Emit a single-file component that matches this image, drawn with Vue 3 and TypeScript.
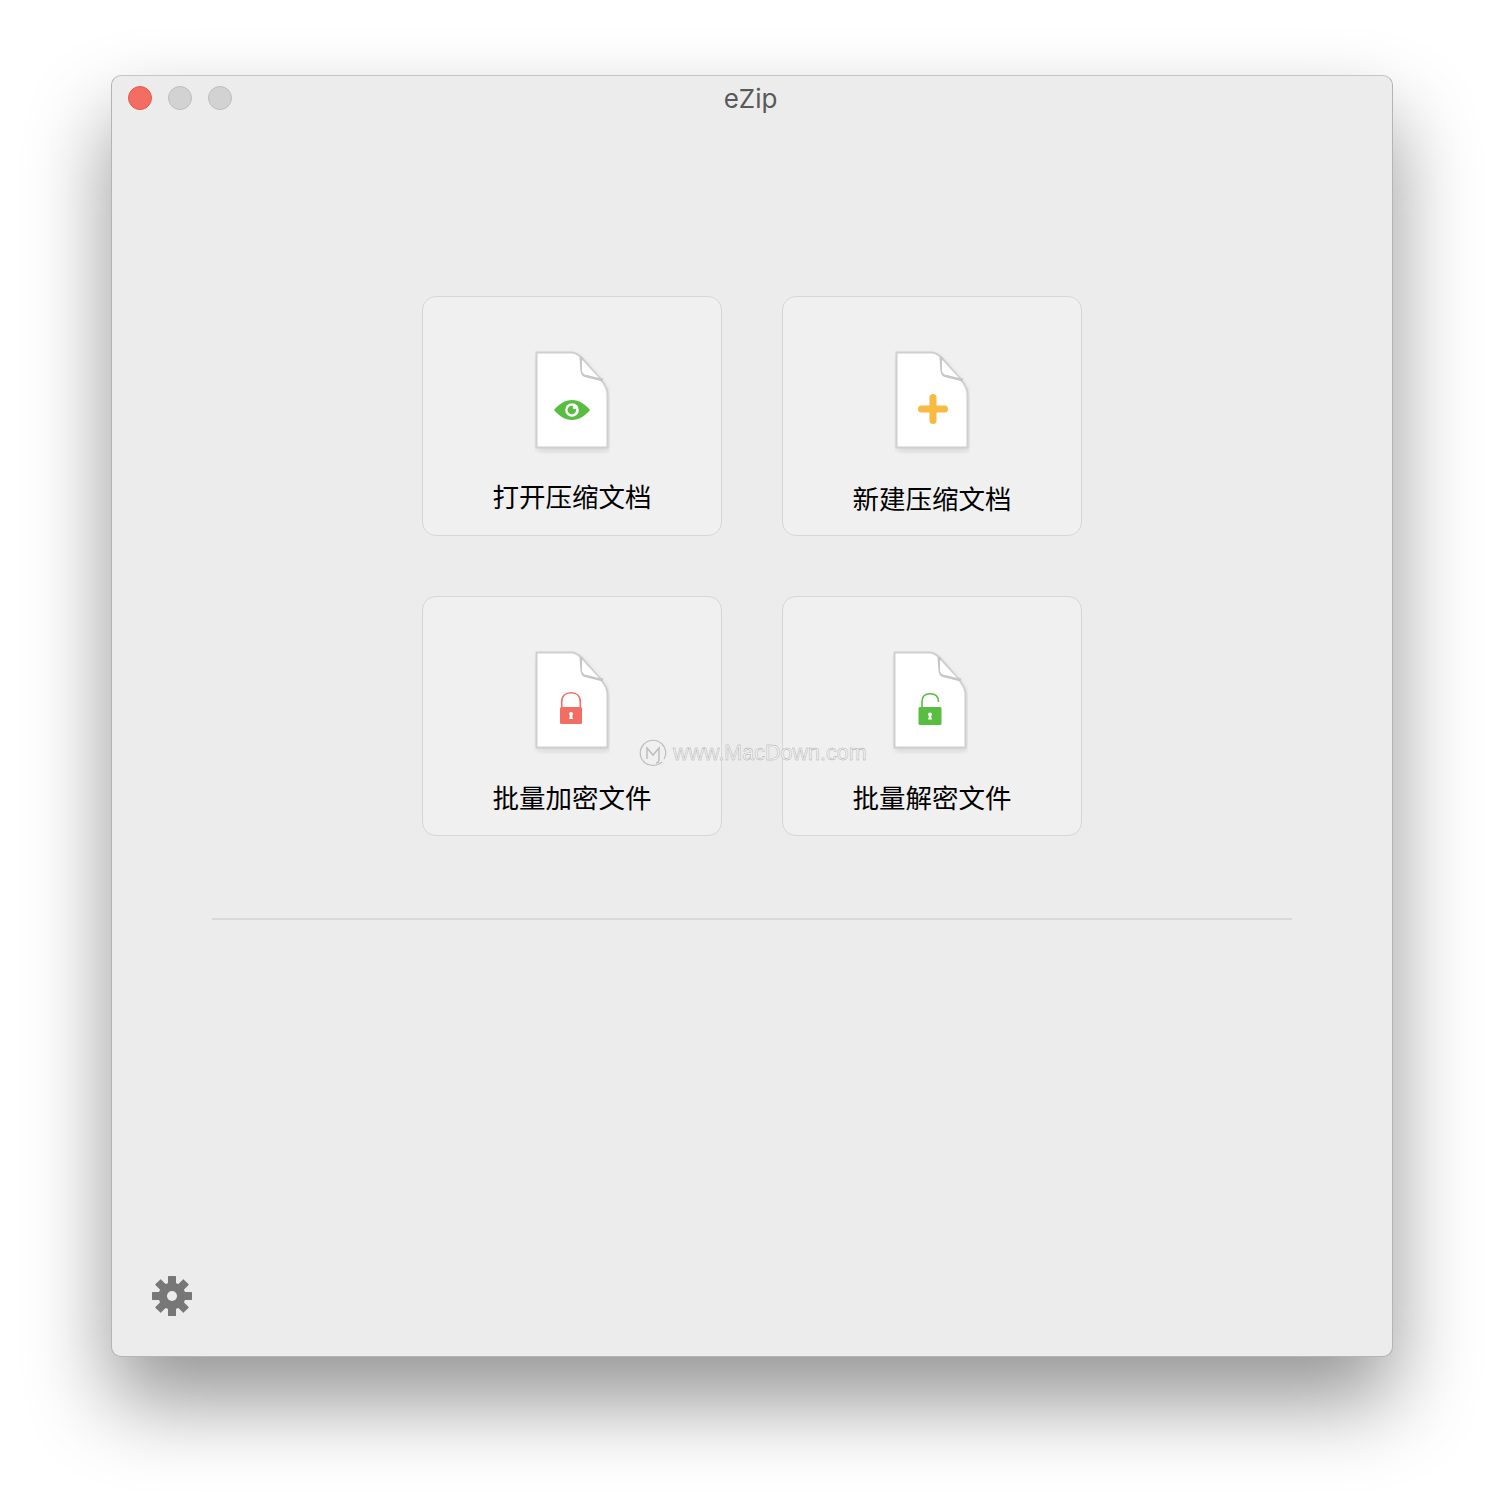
<script setup lang="ts">
interface Action {
  id: string;
  label: string;
  icon: 'eye' | 'plus' | 'lock' | 'unlock';
}

const actions: Action[] = [
  { id: 'open', label: '打开压缩文档', icon: 'eye' },
  { id: 'create', label: '新建压缩文档', icon: 'plus' },
  { id: 'encrypt', label: '批量加密文件', icon: 'lock' },
  { id: 'decrypt', label: '批量解密文件', icon: 'unlock' },
];

const teeth = [0, 45, 90, 135, 180, 225, 270, 315];

const pageShape = 'M.5.5H35C40 .5 43 3 46 6L66 29C69 33 71.500 37 71.500 42V95.500H.5Z';
</script>

<template>
  <div class="page">
    <div class="window">
      <header class="titlebar">
        <div class="lights">
          <span class="light close"></span>
          <span class="light"></span>
          <span class="light"></span>
        </div>
        <div class="title">eZip</div>
        <div></div>
      </header>

      <main class="actions">
        <button v-for="a in actions" :key="a.id" class="card" :class="a.id">
          <svg class="doc" width="76" height="104" viewBox="-2 -2 76 104">
            <defs>
              <filter :id="'soft-' + a.id" x="-20%" y="-20%" width="140%" height="140%">
                <feGaussianBlur stdDeviation="3" />
              </filter>
            </defs>
            <path :d="pageShape" fill="#000" opacity="0.13" transform="translate(1 3)" :filter="'url(#soft-' + a.id + ')'" />
            <path :d="pageShape" fill="#fff" stroke="#cfcfcf" stroke-width="2" />
            <path d="M45 5L46 19C46.500 22 48 24 51 24L67 28" fill="none" stroke="#c6c6c6" stroke-width="3" />
            <path d="M46 8L63 26L51 23C48 23 46.500 21 46 19Z" fill="#fff" />

            <g v-if="a.icon === 'eye'">
              <path d="M18 58C23 52 29 48 36 48C43 48 49 52 54 58C49 64 43 68 36 68C29 68 23 64 18 58Z" fill="#58bd40" />
              <circle cx="36" cy="58" r="6.800" fill="#fff" />
              <circle cx="35.800" cy="58" r="4.300" fill="#58bd40" />
              <circle cx="38.500" cy="55.500" r="1.800" fill="#fff" />
            </g>
            <g v-else-if="a.icon === 'plus'">
              <path d="M25.500 57H48.500M37 45.500V68.500" stroke="#f8ba43" stroke-width="7" stroke-linecap="round" />
            </g>
            <g v-else-if="a.icon === 'lock'">
              <path d="M25.700 56V50C25.700 44 29.500 40.800 35 40.800C40.500 40.800 44.300 44 44.300 50V56" fill="none" stroke="#f26e62" stroke-width="1.600" />
              <rect x="24" y="55" width="22" height="17" rx="1.500" fill="#f26e62" />
              <circle cx="35" cy="62" r="2" fill="#fff" />
              <path d="M34.300 62.500H35.700L37 67H33Z" fill="#fff" />
            </g>
            <g v-else>
              <path d="M28 56V50C28 44.500 31 41.800 36 41.800C41 41.800 44.500 44.500 44.500 50" fill="none" stroke="#58bd40" stroke-width="1.600" />
              <rect x="24.500" y="55" width="23" height="18" rx="1.500" fill="#58bd40" />
              <circle cx="36" cy="62.500" r="2" fill="#fff" />
              <path d="M35.300 63H36.700L38 67.500H34Z" fill="#fff" />
            </g>
          </svg>
          <span class="label">{{ a.label }}</span>
        </button>
      </main>

      <hr class="divider" />

      <footer class="bottom">
        <svg width="40" height="40" viewBox="0 0 40 40">
          <circle cx="20" cy="20" r="13.500" fill="#777" />
          <rect v-for="t in teeth" :key="t" x="16" y="0" width="8" height="12" rx="0.500" fill="#777" :transform="`rotate(${t} 20 20)`" />
          <circle cx="20" cy="20" r="5" fill="#ececec" />
        </svg>
      </footer>

      <div class="watermark">
        <svg width="30" height="30" viewBox="0 0 30 30" fill="none" stroke="#bdbdbd" stroke-width="1.200">
          <path d="M21 26C17 28 10 28 6 24C1 19 1 11 6 6C11 1 19 1 24 6C28 10 29 16 26 21" />
          <path d="M9 21V10L15 17L21 10V21C21 23 20 25 18 25" stroke-width="1.500" />
          <path d="M21 26L24 24" />
        </svg>
        <span>www.MacDown.com</span>
      </div>
    </div>
  </div>
</template>

<style scoped>
.page {
  width: 1504px;
  height: 1504px;
  padding: 75px 111px 0;
  box-sizing: border-box;
  background: #fff;
}

.window {
  position: relative;
  width: 1282px;
  height: 1282px;
  box-sizing: border-box;
  display: flex;
  flex-direction: column;
  background: #ececec;
  border: 1px solid #b4b4b4;
  border-top-color: #c6c6c6;
  border-radius: 10px;
  box-shadow: 0 44px 84px rgba(0, 0, 0, 0.42);
}

.titlebar {
  display: grid;
  grid-template-columns: 1fr auto 1fr;
  align-items: center;
  height: 44px;
  padding: 0 16px;
}

.lights {
  display: flex;
  gap: 16px;
}

.light {
  width: 24px;
  height: 24px;
  box-sizing: border-box;
  border-radius: 50%;
  background: #d2d2d2;
  border: 1px solid #bebebe;
}

.light.close {
  background: #f36d62;
  border-color: #e05b50;
}

.title {
  margin: 0 3px 0 0;
  font-family: "Inter", "Liberation Sans", sans-serif;
  font-size: 26px;
  color: #595959;
}

.actions {
  display: grid;
  grid-template-columns: 300px 300px;
  grid-auto-rows: 240px;
  gap: 60px;
  margin: 176px 0 0 310px;
}

.card {
  display: flex;
  flex-direction: column;
  align-items: center;
  padding: 53px 0 0;
  box-sizing: border-box;
  background: #f0f0f0;
  border: 1px solid #d7d7d7;
  border-radius: 14px;
}

.card.decrypt .doc {
  margin-left: -4px;
}

.label {
  margin-top: 24px;
  font-family: "Noto Sans CJK SC", sans-serif;
  font-size: 26.500px;
  line-height: 36px;
  color: #000;
}

.card.create .label {
  margin-top: 26px;
}

.card.encrypt .label,
.card.decrypt .label {
  margin-top: 25px;
}

.divider {
  width: 1080px;
  height: 2px;
  margin: 82px 0 0 100px;
  border: 0;
  background: #d9d9d9;
}

.bottom {
  margin: 356px 0 0 40px;
  height: 40px;
}

.watermark {
  position: absolute;
  left: 526px;
  top: 662px;
  display: flex;
  align-items: center;
  gap: 5px;
  font-family: "Liberation Sans", sans-serif;
  font-size: 21.500px;
  color: #f3f3f3;
  -webkit-text-stroke: 0.4px #a8a8a8;
  pointer-events: none;
}
</style>
